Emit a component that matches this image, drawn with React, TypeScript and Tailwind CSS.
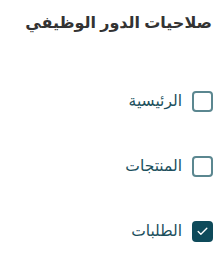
import { Check } from "lucide-react";

const items = [
  { label: "الرئيسية", checked: false },
  { label: "المنتجات", checked: false },
  { label: "الطلبات", checked: true },
];

export default function App() {
  return (
    <div dir="rtl" className="w-[217px] h-[254px] bg-white pr-[4px] pt-[8px]" style={{ fontFamily: '"Noto Sans", "DejaVu Sans", sans-serif' }}>
      <h2 className="text-[16px] font-semibold text-[#333] leading-[28px] pr-[1px]">صلاحيات الدور الوظيفي</h2>
      <div className="mt-[54px] flex flex-col gap-[43px]">
        {items.map((it) => (
          <label key={it.label} className="flex items-center gap-[10px] h-[22px]">
            {it.checked ? (
              <span className="w-[21px] h-[21px] rounded-[4px] bg-[#0e4a5a] flex items-center justify-center">
                <Check size={13} strokeWidth={2.5} className="text-white" />
              </span>
            ) : (
              <span className="w-[21px] h-[21px] rounded-[4px] border-2 border-[#5b8790]" />
            )}
            <span className="text-[15.5px] text-[#1b4f5c]">{it.label}</span>
          </label>
        ))}
      </div>
    </div>
  );
}
